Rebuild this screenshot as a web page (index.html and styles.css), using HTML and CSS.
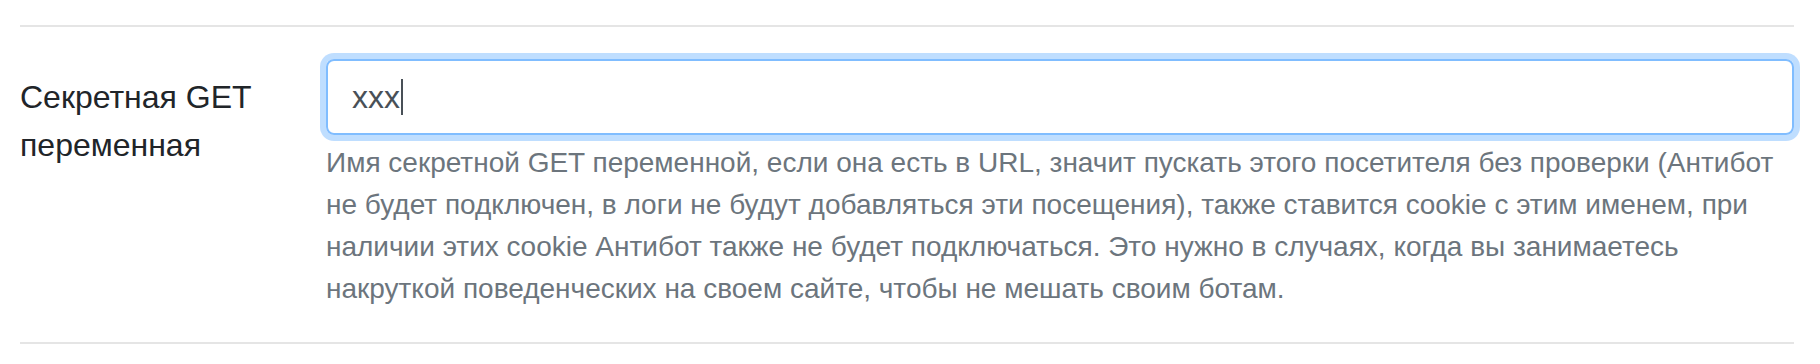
FILE: index.html
```html
<!DOCTYPE html>
<html>
<head>
    <meta charset="UTF-8" />
    <meta name="viewport" content="width=device-width, initial-scale=1.0">
    <link rel="stylesheet" href="styles.css">
</head>
<body>

    <main class="container">

        <hr class="divider">

        <div class="form-row">
            <label class="form-label" for="secretVar">Секретная GET переменная</label>
            <div class="form-field">
                <div class="form-control is-focused" id="secretVar">
                    <span class="value">xxx</span><span class="caret"></span>
                </div>
                <p class="form-text">Имя секретной GET переменной, если она есть в URL, значит пускать этого посетителя без проверки (Антибот не будет подключен, в логи не будут добавляться эти посещения), также ставится cookie с этим именем, при наличии этих cookie Антибот также не будет подключаться. Это нужно в случаях, когда вы занимаетесь накруткой поведенческих на своем сайте, чтобы не мешать своим ботам.</p>
            </div>
        </div>

        <hr class="divider">

    </main>

</body>
</html>
```

FILE: styles.css
```css
* {
    margin: 0;
    padding: 0;
    box-sizing: border-box;
}

body {
    font-family: "Liberation Sans", Arial, sans-serif;
    color: #212529;
    background: #fff;
}

.container {
    width: 1794px;
    padding-left: 20px;
    padding-top: 25px;
}

.divider {
    border: 0;
    border-top: 2px solid rgba(0, 0, 0, .1);
}

.form-row {
    display: grid;
    grid-template-columns: 306px 1fr;
    margin-top: 32px;
    margin-bottom: 32px;
}

.form-label {
    font-size: 32px;
    line-height: 48px;
    padding-top: 14px;
    padding-right: 40px;
}

.form-control {
    height: 76px;
    padding: 12px 24px;
    font-size: 32px;
    line-height: 48px;
    color: #495057;
    border: 2px solid #ced4da;
    border-radius: 8px;
    display: flex;
    align-items: center;
}

.form-control.is-focused {
    border-color: #80bdff;
    box-shadow: 0 0 0 6px rgba(0, 123, 255, .25);
}

.caret {
    width: 2px;
    height: 36px;
    background: #495057;
    margin-left: 1px;
}

.form-text {
    margin-top: 7px;
    font-size: 28px;
    line-height: 42px;
    color: #6c757d;
}
```
